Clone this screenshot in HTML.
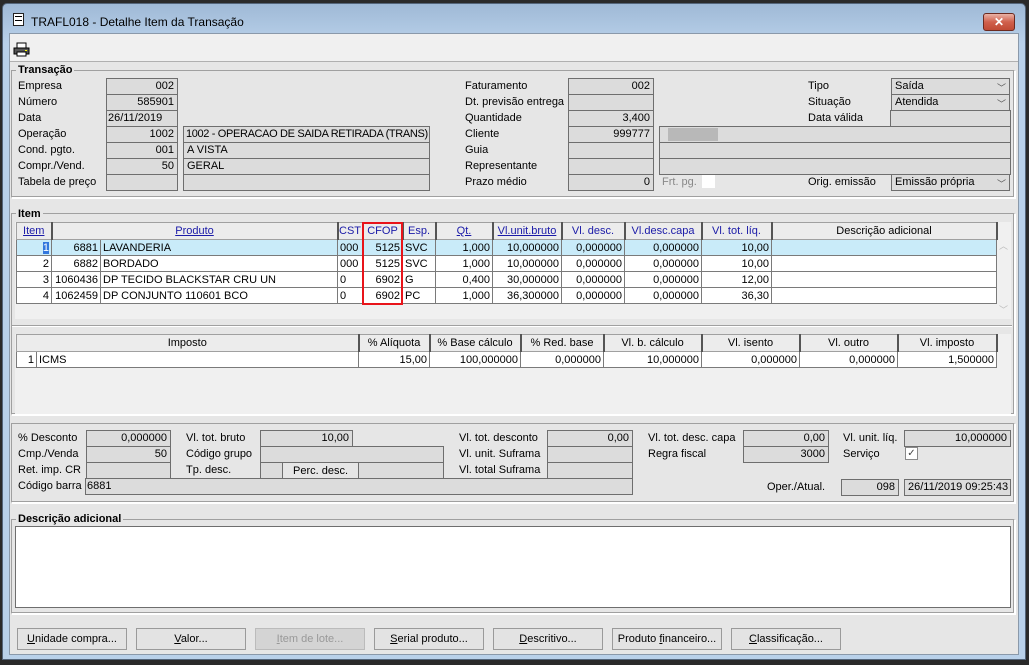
<!DOCTYPE html>
<html><head><meta charset="utf-8"><style>
*{box-sizing:border-box;margin:0;padding:0}
body{width:1029px;height:665px;background:#2a2a2a;position:relative;overflow:hidden;font-family:"Liberation Sans",sans-serif;font-size:11px;color:#000}
.a{position:absolute}
.win{left:2px;top:3px;width:1024px;height:657px;background:linear-gradient(#9fb9d6,#b9d1ea 40px,#b9d1ea);border-radius:5px 5px 0 0;border:1px solid #54657a}
.client{left:9px;top:33px;width:1010px;height:622px;background:#e6e6e6;border:1px solid #8a99aa}
.tb{left:10px;top:34px;width:1008px;height:28px;background:#f0f0f0;border-bottom:1px solid #b0b0b0}
.l{position:absolute;white-space:nowrap;line-height:16px}
.f{position:absolute;height:17px;background:#dcdcdc;border:1px solid #6e6e6e;line-height:15px;padding:0 3px;white-space:nowrap;overflow:hidden}
.r{text-align:right}
.g{position:absolute;border:1px solid #a0a0a0;border-right-color:#fff;border-bottom-color:#fff;box-shadow:inset -1px -1px 0 #a0a0a0,1px 1px 0 #fff}
.gt{position:absolute;font-weight:bold;background:#e6e6e6;padding:0 2px;line-height:14px;font-size:11px}
table{border-collapse:collapse;position:absolute;table-layout:fixed}
td{border:1px solid #7a7a7a;height:16px;line-height:14px;padding:0 2px;white-space:nowrap;overflow:hidden;background:#fff}
th{font-weight:normal;height:17px;border:1px solid #a0a0a0;border-right:2px solid #555;background:#ececec;line-height:14px;white-space:nowrap;overflow:hidden}
.bl th.u{color:#1a1aa8;text-decoration:underline}
.bl th.n{color:#1a1aa8}
tr.s td{background:#c9ebf9}
.btn{position:absolute;top:628px;width:110px;height:22px;border:1px solid #9a9a9a;background:#e3e3e3;text-align:center;line-height:20px}
.cb{position:absolute;width:13px;height:13px;background:#fff;border:1px solid #8a8a8a}
.dd{position:absolute;right:3px;top:2px;font-size:9px;color:#555}
</style></head><body>
<div class="a win"></div>
<div class="a" style="left:13px;top:13px;width:11px;height:13px;border:1px solid #222;background:#fff"><div style="margin:2px 1px;border-top:1px solid #000;border-bottom:1px solid #000;height:5px"></div></div>
<div class="l" style="left:31px;top:14px;font-size:12px">TRAFL018 - Detalhe Item da Transação</div>
<div class="a" style="left:983px;top:13px;width:32px;height:18px;background:linear-gradient(#e9b2a6,#d0604c 50%,#c04a35);border:1px solid #6b2a20;border-radius:3px;color:#fff;text-align:center;font-weight:bold;font-size:12px;line-height:16px">✕</div>
<div class="a client"></div>
<div class="a tb"></div>
<svg class="a" style="left:13px;top:42px" width="17" height="15"><rect x="4" y="1" width="9" height="5" fill="#fff" stroke="#000"/><rect x="1" y="6" width="15" height="6" fill="#555" stroke="#000"/><rect x="4" y="10" width="9" height="4" fill="#fff" stroke="#000"/><rect x="12" y="8" width="2" height="1" fill="#ff0"/></svg>

<!-- Transação -->
<div class="g" style="left:11px;top:70px;width:1004px;height:128px"></div>
<div class="gt" style="left:16px;top:63px">Transação</div>
<div class="l" style="left:18px;top:78px">Empresa</div>
<div class="l" style="left:18px;top:94px">Número</div>
<div class="l" style="left:18px;top:110px">Data</div>
<div class="l" style="left:18px;top:126px">Operação</div>
<div class="l" style="left:18px;top:142px">Cond. pgto.</div>
<div class="l" style="left:18px;top:158px">Compr./Vend.</div>
<div class="l" style="left:18px;top:174px">Tabela de preço</div>
<div class="f r" style="left:106px;top:78px;width:72px">002</div>
<div class="f r" style="left:106px;top:94px;width:72px">585901</div>
<div class="f" style="left:106px;top:110px;width:72px;padding-left:1px">26/11/2019</div>
<div class="f r" style="left:106px;top:126px;width:72px">1002</div>
<div class="f r" style="left:106px;top:142px;width:72px">001</div>
<div class="f r" style="left:106px;top:158px;width:72px">50</div>
<div class="f" style="left:106px;top:174px;width:72px"></div>
<div class="f" style="left:183px;top:126px;width:247px;letter-spacing:-0.35px;padding-left:2px">1002 - OPERACAO DE SAIDA RETIRADA (TRANS)</div>
<div class="f" style="left:183px;top:142px;width:247px">A VISTA</div>
<div class="f" style="left:183px;top:158px;width:247px">GERAL</div>
<div class="f" style="left:183px;top:174px;width:247px"></div>
<div class="l" style="left:465px;top:78px">Faturamento</div>
<div class="l" style="left:465px;top:94px">Dt. previsão entrega</div>
<div class="l" style="left:465px;top:110px">Quantidade</div>
<div class="l" style="left:465px;top:126px">Cliente</div>
<div class="l" style="left:465px;top:142px">Guia</div>
<div class="l" style="left:465px;top:158px">Representante</div>
<div class="l" style="left:465px;top:174px">Prazo médio</div>
<div class="f r" style="left:568px;top:78px;width:86px">002</div>
<div class="f" style="left:568px;top:94px;width:86px"></div>
<div class="f r" style="left:568px;top:110px;width:86px">3,400</div>
<div class="f r" style="left:568px;top:126px;width:86px">999777</div>
<div class="f" style="left:568px;top:142px;width:86px"></div>
<div class="f" style="left:568px;top:158px;width:86px"></div>
<div class="f r" style="left:568px;top:174px;width:86px">0</div>
<div class="f" style="left:659px;top:126px;width:352px"><div class="a" style="left:8px;top:1px;width:50px;height:13px;background:#b8b8b8"></div></div>
<div class="f" style="left:659px;top:142px;width:352px"></div>
<div class="f" style="left:659px;top:158px;width:352px"></div>
<div class="l" style="left:662px;top:174px;color:#888">Frt. pg.</div>
<div class="a" style="left:702px;top:175px;width:13px;height:13px;background:#fff"></div>
<div class="l" style="left:808px;top:78px">Tipo</div>
<div class="l" style="left:808px;top:94px">Situação</div>
<div class="l" style="left:808px;top:110px">Data válida</div>
<div class="l" style="left:808px;top:174px">Orig. emissão</div>
<div class="f" style="left:891px;top:78px;width:119px">Saída<span class="dd">﹀</span></div>
<div class="f" style="left:891px;top:94px;width:119px">Atendida<span class="dd">﹀</span></div>
<div class="f" style="left:890px;top:110px;width:121px"></div>
<div class="f" style="left:891px;top:174px;width:119px">Emissão própria<span class="dd">﹀</span></div>

<!-- Item -->
<div class="g" style="left:11px;top:213px;width:1004px;height:202px"></div>
<div class="gt" style="left:16px;top:207px">Item</div>
<div class="a" style="left:15px;top:222px;width:996px;height:97px;background:#f0f0f0"></div>
<table class="bl" style="left:16px;top:222px;width:980px">
<colgroup><col style="width:35px"><col style="width:49px"><col style="width:237px"><col style="width:25px"><col style="width:40px"><col style="width:33px"><col style="width:57px"><col style="width:69px"><col style="width:63px"><col style="width:77px"><col style="width:70px"><col style="width:225px"></colgroup>
<tr><th class="u">Item</th><th class="u" colspan="2">Produto</th><th class="n">CST</th><th class="n">CFOP</th><th class="n">Esp.</th><th class="u">Qt.</th><th class="u">Vl.unit.bruto</th><th class="n">Vl. desc.</th><th class="n">Vl.desc.capa</th><th class="n">Vl. tot. líq.</th><th>Descrição adicional</th></tr>
<tr class="s"><td class="r"><span style="background:#3377dd;color:#fff">1</span></td><td class="r">6881</td><td>LAVANDERIA</td><td>000</td><td class="r">5125</td><td>SVC</td><td class="r">1,000</td><td class="r">10,000000</td><td class="r">0,000000</td><td class="r">0,000000</td><td class="r">10,00</td><td></td></tr>
<tr><td class="r">2</td><td class="r">6882</td><td>BORDADO</td><td>000</td><td class="r">5125</td><td>SVC</td><td class="r">1,000</td><td class="r">10,000000</td><td class="r">0,000000</td><td class="r">0,000000</td><td class="r">10,00</td><td></td></tr>
<tr><td class="r">3</td><td class="r">1060436</td><td>DP TECIDO BLACKSTAR CRU UN</td><td>0</td><td class="r">6902</td><td>G</td><td class="r">0,400</td><td class="r">30,000000</td><td class="r">0,000000</td><td class="r">0,000000</td><td class="r">12,00</td><td></td></tr>
<tr><td class="r">4</td><td class="r">1062459</td><td>DP CONJUNTO 110601 BCO</td><td>0</td><td class="r">6902</td><td>PC</td><td class="r">1,000</td><td class="r">36,300000</td><td class="r">0,000000</td><td class="r">0,000000</td><td class="r">36,30</td><td></td></tr>
</table>
<div class="a" style="left:362px;top:222px;width:41px;height:83px;border:2px solid #e8141a"></div>
<div class="l" style="left:999px;top:238px;color:#bbb;font-size:9px">︿</div>
<div class="l" style="left:999px;top:302px;color:#bbb;font-size:9px">﹀</div>
<div class="a" style="left:12px;top:325px;width:1000px;border-top:1px solid #a0a0a0;border-bottom:1px solid #fff"></div>
<div class="a" style="left:15px;top:334px;width:996px;height:80px;background:#f0f0f0"></div>
<table style="left:16px;top:334px;width:980px">
<colgroup><col style="width:20px"><col style="width:322px"><col style="width:71px"><col style="width:91px"><col style="width:83px"><col style="width:98px"><col style="width:98px"><col style="width:98px"><col style="width:99px"></colgroup>
<tr><th colspan="2">Imposto</th><th>% Alíquota</th><th>% Base cálculo</th><th>% Red. base</th><th>Vl. b. cálculo</th><th>Vl. isento</th><th>Vl. outro</th><th>Vl. imposto</th></tr>
<tr><td class="r" style="border-right:none">1</td><td>ICMS</td><td class="r">15,00</td><td class="r">100,000000</td><td class="r">0,000000</td><td class="r">10,000000</td><td class="r">0,000000</td><td class="r">0,000000</td><td class="r">1,500000</td></tr>
</table>

<!-- bottom fields -->
<div class="g" style="left:11px;top:423px;width:1004px;height:80px"></div>
<div class="l" style="left:18px;top:430px">% Desconto</div>
<div class="l" style="left:18px;top:446px">Cmp./Venda</div>
<div class="l" style="left:18px;top:462px">Ret. imp. CR</div>
<div class="l" style="left:18px;top:478px">Código barra</div>
<div class="f r" style="left:86px;top:430px;width:85px">0,000000</div>
<div class="f r" style="left:86px;top:446px;width:85px">50</div>
<div class="f" style="left:86px;top:462px;width:85px"></div>
<div class="f" style="left:85px;top:478px;width:548px;padding-left:1px">6881</div>
<div class="l" style="left:186px;top:430px">Vl. tot. bruto</div>
<div class="l" style="left:186px;top:446px">Código grupo</div>
<div class="l" style="left:186px;top:462px">Tp. desc.</div>
<div class="f r" style="left:260px;top:430px;width:93px">10,00</div>
<div class="f" style="left:260px;top:446px;width:184px"></div>
<div class="f" style="left:260px;top:462px;width:23px"></div>
<div class="l" style="left:282px;top:462px;width:77px;height:17px;border:1px solid #6e6e6e;text-align:center">Perc. desc.</div>
<div class="f" style="left:358px;top:462px;width:86px"></div>
<div class="l" style="left:459px;top:430px">Vl. tot. desconto</div>
<div class="l" style="left:459px;top:446px">Vl. unit. Suframa</div>
<div class="l" style="left:459px;top:462px">Vl. total Suframa</div>
<div class="f r" style="left:547px;top:430px;width:86px">0,00</div>
<div class="f" style="left:547px;top:446px;width:86px"></div>
<div class="f" style="left:547px;top:462px;width:86px"></div>
<div class="l" style="left:648px;top:430px">Vl. tot. desc. capa</div>
<div class="l" style="left:648px;top:446px">Regra fiscal</div>
<div class="f r" style="left:743px;top:430px;width:86px">0,00</div>
<div class="f r" style="left:743px;top:446px;width:86px">3000</div>
<div class="l" style="left:843px;top:430px">Vl. unit. líq.</div>
<div class="l" style="left:843px;top:446px">Serviço</div>
<div class="f r" style="left:904px;top:430px;width:107px">10,000000</div>
<div class="cb" style="left:905px;top:447px;font-size:10px;line-height:11px;text-align:center;color:#444">✓</div>
<div class="l" style="left:767px;top:479px">Oper./Atual.</div>
<div class="f r" style="left:841px;top:479px;width:58px">098</div>
<div class="f" style="left:904px;top:479px;width:107px">26/11/2019 09:25:43</div>

<!-- Descrição adicional -->
<div class="g" style="left:11px;top:519px;width:1004px;height:95px"></div>
<div class="gt" style="left:16px;top:512px">Descrição adicional</div>
<div class="a" style="left:15px;top:526px;width:996px;height:82px;background:#fff;border:1px solid #6e6e6e"></div>

<div class="btn" style="left:17px"><u>U</u>nidade compra...</div>
<div class="btn" style="left:136px"><u>V</u>alor...</div>
<div class="btn" style="left:255px;background:#d4d4d4;color:#999;border-color:#bbb"><u>I</u>tem de lote...</div>
<div class="btn" style="left:374px"><u>S</u>erial produto...</div>
<div class="btn" style="left:493px"><u>D</u>escritivo...</div>
<div class="btn" style="left:612px">Produto <u>f</u>inanceiro...</div>
<div class="btn" style="left:731px"><u>C</u>lassificação...</div>
</body></html>
